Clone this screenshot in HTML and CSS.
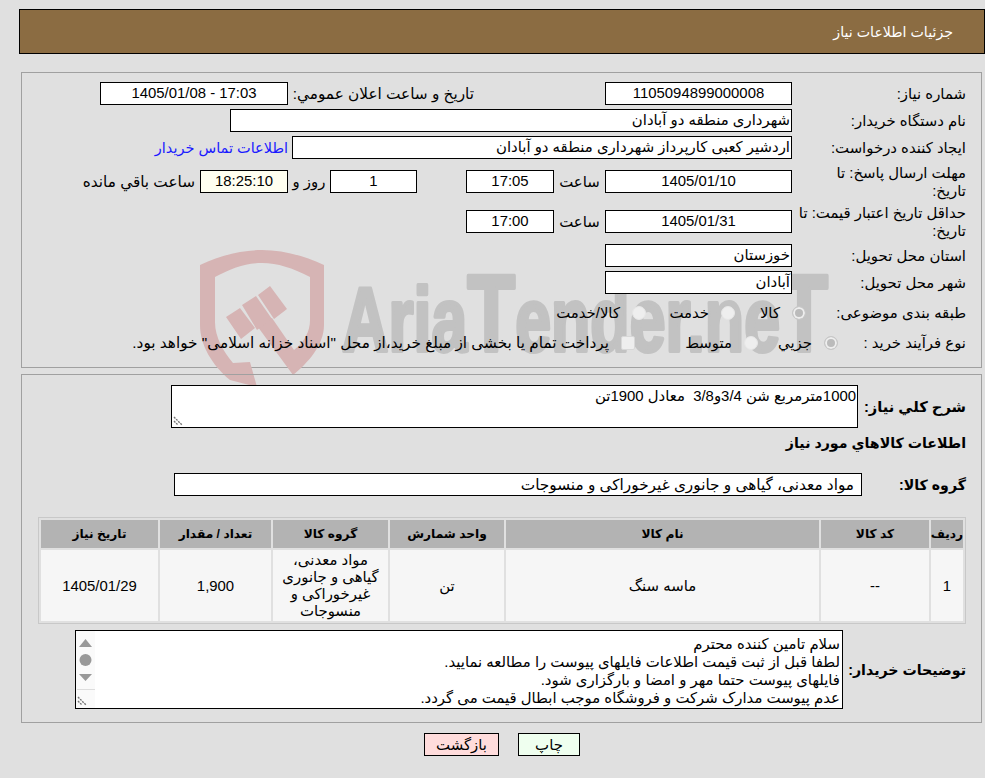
FILE: index.html
```html
<!DOCTYPE html>
<html lang="fa" dir="rtl">
<head>
<meta charset="utf-8">
<title>جزئیات اطلاعات نیاز</title>
<link rel="stylesheet" href="styles.css">
</head>
<body>
<header class="title-bar"><span>جزئیات اطلاعات نیاز</span></header>

<section class="panel panel-top">
  <svg class="watermark" viewBox="200 240 640 150" aria-hidden="true">
    <path class="wm-red" d="M200 265 C222 255 242 250 262 250 C282 250 302 255 324 265 V325 C324 345 308 363 293 375 L255 323 L272 318 L294 350 C304 342 310 332 310 320 V277 C292 268 278 263 262 263 C246 263 232 268 215 277 V322 C215 338 224 352 233 363 L250 362 L257 387 L230 380 C212 365 200 345 200 325 Z"/>
    <path class="wm-red" d="M226 317 L240 308 L255 328 L241 339 Z M242 305 L256 296 L272 319 L257 330 Z M258 295 L270 286 L287 309 L274 319 Z"/>
    <text class="wm-text" x="342" y="351" textLength="486" lengthAdjust="spacingAndGlyphs">Aria<tspan class="wm-big">T</tspan>ender.ne<tspan class="wm-big">T</tspan></text>
  </svg>
  <div class="row">
    <span class="label">شماره نیاز:</span>
    <span class="box date-box">1105094899000008</span>
    <span class="public-label">تاریخ و ساعت اعلان عمومي:</span>
    <span class="box public-box">17:03 - 1405/01/08</span>
  </div>
  <div class="row">
    <span class="label">نام دستگاه خریدار:</span>
    <span class="box box-start buyer-box">شهرداری منطقه دو آبادان</span>
  </div>
  <div class="row">
    <span class="label">ایجاد کننده درخواست:</span>
    <span class="box box-start creator-box">اردشیر کعبی کارپرداز شهرداری منطقه دو آبادان</span>
    <a class="contact" href="#">اطلاعات تماس خریدار</a>
  </div>
  <div class="row r-tall">
    <span class="label">مهلت ارسال پاسخ: تا<br>تاریخ:</span>
    <span class="box date-box">1405/01/10</span>
    <span class="hour">ساعت</span>
    <span class="box time-box">17:05</span>
    <span class="box day-box">1</span>
    <span class="day-word">روز و</span>
    <span class="box remain-box">18:25:10</span>
    <span class="remain-word">ساعت باقي مانده</span>
  </div>
  <div class="row r-tall">
    <span class="label">حداقل تاریخ اعتبار قیمت: تا<br>تاریخ:</span>
    <span class="box date-box">1405/01/31</span>
    <span class="hour">ساعت</span>
    <span class="box time-box">17:00</span>
  </div>
  <div class="row r-province">
    <span class="label">استان محل تحویل:</span>
    <span class="box box-start date-box">خوزستان</span>
  </div>
  <div class="row">
    <span class="label">شهر محل تحویل:</span>
    <span class="box box-start date-box">آبادان</span>
  </div>
  <div class="row r-radio">
    <span class="label label-cat">طبقه بندی موضوعی:</span>
    <span class="radio on"></span><span class="opt opt-a">کالا</span>
    <span class="radio"></span><span class="opt opt-b">خدمت</span>
    <span class="radio"></span><span class="opt">کالا/خدمت</span>
  </div>
  <div class="row r-radio2">
    <span class="label label-proc">نوع فرآیند خرید :</span>
    <span class="radio on"></span><span class="opt opt-c">جزيي</span>
    <span class="radio"></span><span class="opt opt-d">متوسط</span>
    <span class="check"></span><span class="opt opt-long">پرداخت تمام یا بخشی از مبلغ خرید،از محل "اسناد خزانه اسلامی" خواهد بود.</span>
  </div>
</section>

<section class="panel panel-bottom">
  <div class="row r-desc">
    <span class="label-b l-desc">شرح کلي نیاز:</span>
    <div class="area desc"><span>1000مترمربع شن 3/4و3/8&nbsp; معادل 1900تن</span>
      <svg class="grip" viewBox="0 0 10 10" aria-hidden="true"><path d="M1 1 L9 9 M1 5 L5 9" stroke="#777" stroke-width="1.4" stroke-dasharray="2 1"/></svg>
    </div>
  </div>
  <h2 class="subhead">اطلاعات کالاهاي مورد نیاز</h2>
  <div class="row r-group">
    <span class="label-b l-group">گروه کالا:</span>
    <span class="box group-box">مواد معدنی، گیاهی و جانوری غیرخوراکی و منسوجات</span>
  </div>
  <table class="items">
    <thead>
      <tr><th class="c1">ردیف</th><th class="c2">کد کالا</th><th class="c3">نام کالا</th><th class="c4">واحد شمارش</th><th class="c5">گروه کالا</th><th class="c6">تعداد / مقدار</th><th class="c7">تاریخ نیاز</th></tr>
    </thead>
    <tbody>
      <tr><td>1</td><td>--</td><td>ماسه سنگ</td><td>تن</td><td class="group-cell">مواد معدنی، گیاهی و جانوری غیرخوراکی و منسوجات</td><td>1,900</td><td>1405/01/29</td></tr>
    </tbody>
  </table>
  <div class="row r-notes">
    <span class="label-b l-notes">توضیحات خریدار:</span>
    <div class="area notes">
      <div class="notes-text">سلام تامین کننده محترم<br>لطفا قبل از ثبت قیمت اطلاعات فایلهای پیوست را مطالعه نمایید.<br>فایلهای پیوست حتما مهر و امضا و بارگزاری شود.<br>عدم پیوست مدارک شرکت و فروشگاه موجب ابطال قیمت می گردد.</div>
      <div class="scroll">
        <svg class="scroll-svg" viewBox="0 0 19 77" aria-hidden="true">
          <path d="M9.5 8 L16 16 H3 Z M3 43 H16 L9.5 50 Z" fill="#999"/>
          <circle cx="9.5" cy="29" r="6" fill="#999"/>
          <path d="M1 58.5 H19" stroke="#ddd"/>
          <path d="M2 66 L10 74 M2 70 L6 74" stroke="#777" stroke-width="1.4" stroke-dasharray="2 1"/>
        </svg>
      </div>
    </div>
  </div>
</section>

<footer class="actions">
  <button class="btn print" type="button">چاپ</button>
  <button class="btn back" type="button">بازگشت</button>
</footer>
</body>
</html>
```
FILE: styles.css
```css
* { box-sizing: border-box; }
html, body { margin: 0; padding: 0; }
body {
  width: 985px;
  height: 778px;
  overflow: hidden;
  background: #e0e0e0;
  color: #000;
  font-family: "Liberation Sans", "DejaVu Sans", sans-serif;
  font-size: 14.9px;
  padding-top: 9px;
}
.title-bar {
  margin: 0 0 0 19px;
  height: 45px;
  background: #8b6c42;
  border: 1px solid #000;
  color: #fff;
  font-size: 14.2px;
  display: flex;
  align-items: center;
  padding: 0 31px 0 0;
}
.panel {
  position: relative;
  margin-left: 21px;
  margin-right: 3px;
  border: 1px solid #a0a0a0;
}
.panel-top { margin-top: 18px; height: 296px; padding-top: 9px; }
.panel-bottom { margin-top: 6px; height: 349px; padding-top: 10px; }
.watermark {
  position: absolute;
  left: 178px;
  top: 167px;
  width: 640px;
  height: 150px;
  direction: ltr;
  pointer-events: none;
  overflow: hidden;
}
.wm-red { fill: #d6b4b4; }
.wm-text {
  font-family: "Liberation Sans", sans-serif;
  font-weight: 700;
  font-size: 90px;
  fill: #c2c2c2;
  stroke: #c2c2c2;
  stroke-width: 4px;
  stroke-linejoin: round;
}
.wm-big { font-size: 110px; }
.row {
  position: relative;
  z-index: 1;
  display: flex;
  align-items: center;
  height: 23px;
  margin-bottom: 4px;
  padding-right: 15px;
}
.label {
  flex: none;
  width: 168px;
  line-height: 18px;
  margin-left: 6px;
  white-space: nowrap;
}
.label-cat { width: 160px; margin-left: 0; }
.label-proc { width: 128px; margin-left: 0; }
.box {
  flex: none;
  height: 23px;
  line-height: 21px;
  background: #fff;
  border: 1px solid #000;
  text-align: center;
  white-space: nowrap;
  overflow: hidden;
}
.box-start { text-align: right; padding-right: 1px; }
.date-box { width: 187px; }
.public-label { flex: none; width: 181px; margin: 0 131px 0 5px; white-space: nowrap; font-size: 15.3px; }
.public-box { width: 188px; }
.buyer-box { width: 562px; }
.creator-box { width: 500px; }
.contact { color: #1a1aff; text-decoration: none; margin-right: 4px; white-space: nowrap; font-size: 14.5px; }
.r-tall { height: 37px; margin-bottom: 3px; }
.hour { width: 51px; text-align: center; flex: none; }
.time-box { width: 88px; }
.day-box { width: 87px; margin-right: 49px; }
.day-word { flex: none; width: 42px; text-align: center; }
.remain-box { width: 88px; background: #fffff0; }
.remain-word { flex: none; margin-right: 5px; white-space: nowrap; font-size: 15.3px; }
.r-province { margin-top: 4px; }
.r-radio { margin-top: 7px; margin-bottom: 7px; }
.radio {
  flex: none;
  width: 14px;
  height: 14px;
  border-radius: 50%;
  background: #eee;
  border: 1px solid #e6e6e6;
}
.radio.on { background: #bbb; border: 1px solid #c8c8c8; box-shadow: inset 0 0 0 2px #eee; }
.check {
  flex: none;
  width: 14px;
  height: 14px;
  background: #eee;
  border: 1px solid #d8d8d8;
  border-radius: 2px;
}
.opt { flex: none; margin-right: 12px; white-space: nowrap; }
.opt-a { width: 45px; }
.opt-b { width: 63px; }
.opt-c { width: 54px; }
.opt-d { width: 97px; }
.opt-long { font-size: 15.3px; }
.label-b { flex: none; font-weight: 700; font-size: 14.2px; }
.r-desc { height: 43px; margin-bottom: 0; }
.l-desc { width: 108px; font-size: 14.7px; }
.area {
  position: relative;
  flex: none;
  background: #fff;
  border: 1px solid #000;
  text-align: right;
  overflow: hidden;
}
.desc { width: 687px; height: 43px; padding: 1px 1px 0 0; }
.grip {
  position: absolute;
  left: 1px;
  bottom: 1px;
  width: 10px;
  height: 10px;
}
.subhead { position: relative; z-index: 1; margin: 4px 15px 0 0; height: 22px; font-size: 14.2px; line-height: 22px; }
.r-group { margin-top: 19px; margin-bottom: 0; }
.l-group { width: 104px; }
.group-box { width: 688px; text-align: right; padding-right: 7px; font-size: 15.3px; }
.items {
  position: relative;
  z-index: 1;
  margin: 21px 15px 0 0;
  width: 928px;
  border: 1px solid #c8c8c8;
  border-collapse: separate;
  border-spacing: 2px;
  table-layout: fixed;
}
.items th { background: #b3b3b3; height: 28px; padding: 0; font-size: 12.2px; font-weight: 700; }
.items td { background: #f6f6f6; height: 71px; padding: 1px 0 0; text-align: center; line-height: 17px; }
.items .group-cell { padding: 1px 6px 0; }
.c1 { width: 32px; } .c2 { width: 108px; } .c3 { width: 313px; } .c4 { width: 114px; }
.c5 { width: 115px; } .c6 { width: 111px; } .c7 { width: 117px; }
.r-notes { margin-top: 6px; height: 79px; margin-bottom: 0; }
.l-notes { width: 123px; }
.notes { width: 768px; height: 79px; display: flex; }
.notes-text { flex: 1; padding: 4px 2px 0 0; line-height: 18px; white-space: nowrap; }
.scroll { flex: none; width: 19px; height: 77px; background: #fafafa; }
.scroll-svg { display: block; width: 19px; height: 77px; }
.actions {
  display: flex;
  justify-content: center;
  gap: 19px;
  margin-top: 10px;
  padding-left: 19px;
}
.btn {
  height: 23px;
  border: 1px solid #000;
  padding: 0;
  font: inherit;
  color: #000;
}
.print { width: 62px; background: #efffef; }
.back { width: 75px; background: #ffdcdc; }
```
